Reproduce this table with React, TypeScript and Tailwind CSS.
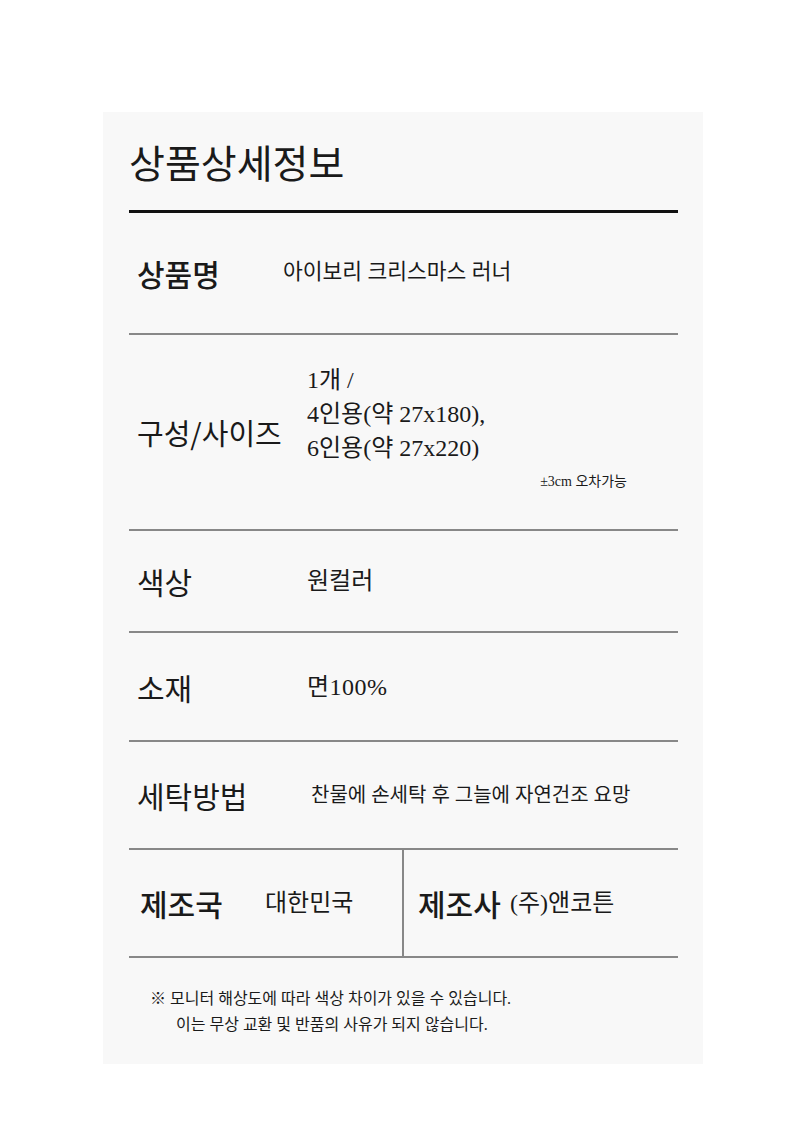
import React from "react";

const SANS = "font-['Noto_Sans_CJK_KR',sans-serif]";
const SERIF = "font-['Liberation_Serif','Noto_Sans_CJK_KR',serif]";

export default function App() {
  return (
    <div className="min-h-[1128px] w-[800px] bg-white pt-[112px]">
      <div className={`ml-[103px] w-[600px] bg-[#f8f8f8] pl-[26px] pr-[25px] text-[#1a1a1a] ${SANS}`}>
        <div className="flex h-[98px] items-center">
          <h1 className="text-[39px] font-normal leading-[46px]">상품상세정보</h1>
        </div>
        <div className="h-[3px] bg-[#111]" />

        {/* 상품명 */}
        <div className="flex h-[122px] items-center border-b-2 border-[#888]">
          <div className="w-[154px] pl-[8px] text-[30px] font-medium leading-none">상품명</div>
          <div className={`${SERIF} text-[21.5px] leading-none`}>아이보리 크리스마스 러너</div>
        </div>

        {/* 구성/사이즈 */}
        <div className="flex h-[196px] border-b-2 border-[#888]">
          <div className="w-[178px] self-center pl-[8px] text-[29px] font-normal leading-none">구성/사이즈</div>
          <div className="flex flex-1 flex-col pt-[28px]">
            <div className={`${SERIF} text-[24px] leading-[34px]`}>
              <div>1개 /</div>
              <div>4인용(약 27x180),</div>
              <div>6인용(약 27x220)</div>
            </div>
            <div className={`${SERIF} mt-[7px] pr-[51px] text-right text-[14px] leading-[20px]`}>±3cm 오차가능</div>
          </div>
        </div>

        {/* 색상 */}
        <div className="flex h-[102px] items-center border-b-2 border-[#888]">
          <div className="w-[178px] pl-[8px] text-[30px] font-normal leading-none">색상</div>
          <div className={`${SERIF} text-[24px] leading-none`}>원컬러</div>
        </div>

        {/* 소재 */}
        <div className="flex h-[109px] items-center border-b-2 border-[#888]">
          <div className="w-[178px] pl-[8px] text-[30px] font-normal leading-none">소재</div>
          <div className={`${SERIF} text-[24px] leading-none tracking-[0.5px]`}>면100%</div>
        </div>

        {/* 세탁방법 */}
        <div className="flex h-[108px] items-center border-b-2 border-[#888]">
          <div className="w-[182px] pl-[8px] text-[30px] font-normal leading-none">세탁방법</div>
          <div className={`${SERIF} text-[20px] leading-none`}>찬물에 손세탁 후 그늘에 자연건조 요망</div>
        </div>

        {/* 제조국 / 제조사 */}
        <div className="flex h-[108px] border-b-2 border-[#888]">
          <div className="flex w-[275px] items-center border-r-2 border-[#888] pl-[11px]">
            <div className="w-[125px] text-[30px] font-medium leading-none">제조국</div>
            <div className={`${SERIF} text-[24px] leading-none`}>대한민국</div>
          </div>
          <div className="flex flex-1 items-center pl-[14px]">
            <div className="w-[92px] text-[30px] font-medium leading-none">제조사</div>
            <div className={`${SERIF} text-[24px] leading-none`}>(주)앤코튼</div>
          </div>
        </div>

        {/* Note */}
        <div className={`${SERIF} pb-[26px] pl-[21px] pt-[28px] text-[16px] leading-[26px]`}>
          <div>※ 모니터 해상도에 따라 색상 차이가 있을 수 있습니다.</div>
          <div className="pl-[26px]">이는 무상 교환 및 반품의 사유가 되지 않습니다.</div>
        </div>
      </div>
    </div>
  );
}
